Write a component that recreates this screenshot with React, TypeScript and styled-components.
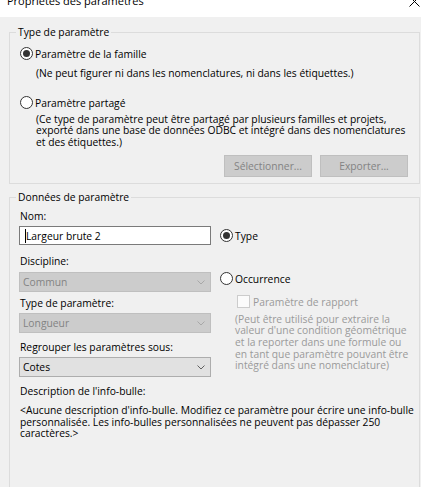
import React from 'react';
import styled, { createGlobalStyle } from 'styled-components';

const GlobalStyle = createGlobalStyle`
  html, body { margin: 0; padding: 0; background: #f0f0f0; }
  body {
    font-family: "Open Sans", "Noto Sans", sans-serif;
    font-size: 10.3px;
    color: #000;
  }
  * { box-sizing: border-box; }
`;

const Window = styled.div`
  width: 421px;
  height: 487px;
  overflow: hidden;
  display: flex;
  flex-direction: column;
  background: #f0f0f0;
`;

const TitleBar = styled.div`
  height: 17px;
  flex: none;
  background: #fff;
  display: flex;
  justify-content: space-between;
  align-items: flex-start;
  padding: 0 1px 0 7px;
  overflow: hidden;
`;

const Title = styled.span`
  font-size: 11px;
  line-height: 16px;
  margin-top: -7px;
  white-space: nowrap;
`;

const CloseIcon = styled.svg`
  flex: none;
  margin-top: -4px;
`;

const Content = styled.div`
  flex: 1;
  display: flex;
  flex-direction: column;
  gap: 7px;
  padding: 9px 1px 0 9px;
`;

const GroupBox = styled.fieldset<{ $height?: number }>`
  margin: 0;
  padding: 0;
  min-width: 0;
  border: 1px solid #dcdcdc;
  flex: none;
  ${(p) => (p.$height ? `height: ${p.$height}px;` : '')}
`;

const Legend = styled.legend`
  margin-left: 6px;
  padding: 0 2px;
  font-size: 10.3px;
  line-height: 12px;
`;

const TypeBody = styled.div`
  display: flex;
  flex-direction: column;
  padding: 9px 0 6px 10px;
`;

const RadioRow = styled.div<{ $mt?: number; $h?: number }>`
  display: flex;
  align-items: center;
  gap: 2px;
  height: ${(p) => p.$h ?? 13}px;
  margin-top: ${(p) => p.$mt ?? 0}px;
  line-height: 12px;
  white-space: nowrap;
`;

const Radio = styled.span<{ $checked?: boolean }>`
  width: 13px;
  height: 13px;
  flex: none;
  border-radius: 50%;
  border: 1px solid #333;
  background: #fff;
  display: inline-flex;
  align-items: center;
  justify-content: center;
  &::after {
    content: '';
    width: 7px;
    height: 7px;
    border-radius: 50%;
    background: #333;
    display: ${(p) => (p.$checked ? 'block' : 'none')};
  }
`;

const Note = styled.div<{ $mt?: number; $ml?: number; $lh?: number; $muted?: boolean }>`
  margin-top: ${(p) => p.$mt ?? 0}px;
  margin-left: ${(p) => p.$ml ?? 0}px;
  line-height: ${(p) => p.$lh ?? 12}px;
  color: ${(p) => (p.$muted ? '#9a9a9a' : '#000')};
  white-space: nowrap;
`;

const ButtonRow = styled.div`
  display: flex;
  justify-content: flex-end;
  gap: 8px;
  margin-top: 6.5px;
  padding-right: 11px;
`;

const Button = styled.button`
  width: 88px;
  height: 22px;
  border: 1px solid #bfbfbf;
  background: #cccccc;
  color: #838383;
  font-family: inherit;
  font-size: 10.3px;
  padding: 0;
  margin: 0;
`;

const DataBody = styled.div`
  display: flex;
  flex-direction: column;
  padding: 0 0 0 9px;
`;

const Columns = styled.div`
  display: flex;
  gap: 9px;
`;

const LeftColumn = styled.div`
  width: 192px;
  flex: none;
  display: flex;
  flex-direction: column;
`;

const RightColumn = styled.div`
  display: flex;
  flex-direction: column;
  padding-top: 23px;
`;

const FieldLabel = styled.div<{ $mt: number }>`
  margin-top: ${(p) => p.$mt}px;
  margin-left: 1px;
  line-height: 12px;
  white-space: nowrap;
`;

const TextBox = styled.div`
  margin-top: 4px;
  height: 19px;
  border: 1px solid #7a7a7a;
  background: #fff;
  display: flex;
  align-items: center;
  padding-left: 5px;
  line-height: 12px;
`;

const Caret = styled.span`
  width: 1px;
  height: 14px;
  background: #000;
  flex: none;
`;

const Select = styled.div<{ $mt: number; $disabled?: boolean }>`
  margin-top: ${(p) => p.$mt}px;
  height: 20px;
  border: 1px solid ${(p) => (p.$disabled ? '#bfbfbf' : '#adadad')};
  background: ${(p) => (p.$disabled ? '#cccccc' : '#e1e1e1')};
  color: ${(p) => (p.$disabled ? '#838383' : '#000')};
  display: flex;
  align-items: center;
  justify-content: space-between;
  padding: 0 5px 0 3px;
  line-height: 12px;
`;

const Chevron = styled.svg<{ $disabled?: boolean }>`
  flex: none;
  stroke: ${(p) => (p.$disabled ? '#a8a8a8' : '#606060')};
`;

const CheckRow = styled.div`
  display: flex;
  align-items: center;
  gap: 3px;
  height: 13px;
  margin: 10px 0 0 17px;
  color: #9a9a9a;
  line-height: 12px;
  white-space: nowrap;
`;

const CheckBox = styled.span`
  width: 13px;
  height: 13px;
  flex: none;
  border: 1px solid #cccccc;
  background: #fbfbfb;
`;

const ChevronDown = ({ disabled }: { disabled?: boolean }) => (
  <Chevron $disabled={disabled} width="8" height="5" viewBox="0 0 8 5" fill="none" strokeWidth="1">
    <polyline points="0.5,0.5 4,4 7.5,0.5" />
  </Chevron>
);

export default function App() {
  return (
    <>
      <GlobalStyle />
      <Window>
        <TitleBar>
          <Title>Propriétés des paramètres</Title>
          <CloseIcon width="11" height="11" viewBox="0 0 11 11" fill="none" stroke="#000" strokeWidth="1">
            <line x1="0.5" y1="0.5" x2="10.5" y2="10.5" />
            <line x1="10.5" y1="0.5" x2="0.5" y2="10.5" />
          </CloseIcon>
        </TitleBar>
        <Content>
          <GroupBox>
            <Legend>Type de paramètre</Legend>
            <TypeBody>
              <RadioRow>
                <Radio $checked />
                <span>Paramètre de la famille</span>
              </RadioRow>
              <Note $mt={7} $ml={16}>
                (Ne peut figurer ni dans les nomenclatures, ni dans les étiquettes.)
              </Note>
              <RadioRow $mt={17}>
                <Radio />
                <span>Paramètre partagé</span>
              </RadioRow>
              <Note $mt={4.5} $ml={16} $lh={11.67}>
                (Ce type de paramètre peut être partagé par plusieurs familles et projets,
                <br />
                exporté dans une base de données ODBC et intégré dans des nomenclatures
                <br />
                et des étiquettes.)
              </Note>
              <ButtonRow>
                <Button disabled>Sélectionner...</Button>
                <Button disabled>Exporter...</Button>
              </ButtonRow>
            </TypeBody>
          </GroupBox>
          <GroupBox $height={310}>
            <Legend>Données de paramètre</Legend>
            <DataBody>
              <Columns>
                <LeftColumn>
                  <FieldLabel $mt={7}>Nom:</FieldLabel>
                  <TextBox>
                    <Caret />
                    <span>Largeur brute 2</span>
                  </TextBox>
                  <FieldLabel $mt={10}>Discipline:</FieldLabel>
                  <Select $mt={5} $disabled>
                    <span>Commun</span>
                    <ChevronDown disabled />
                  </Select>
                  <FieldLabel $mt={5}>Type de paramètre:</FieldLabel>
                  <Select $mt={4} $disabled>
                    <span>Longueur</span>
                    <ChevronDown disabled />
                  </Select>
                  <FieldLabel $mt={8}>Regrouper les paramètres sous:</FieldLabel>
                  <Select $mt={4}>
                    <span>Cotes</span>
                    <ChevronDown />
                  </Select>
                </LeftColumn>
                <RightColumn>
                  <RadioRow $h={19}>
                    <Radio $checked />
                    <span>Type</span>
                  </RadioRow>
                  <RadioRow $mt={27}>
                    <Radio />
                    <span>Occurrence</span>
                  </RadioRow>
                  <CheckRow>
                    <CheckBox />
                    <span>Paramètre de rapport</span>
                  </CheckRow>
                  <Note $mt={5.5} $ml={15} $lh={11.67} $muted>
                    (Peut être utilisé pour extraire la
                    <br />
                    valeur d'une condition géométrique
                    <br />
                    et la reporter dans une formule ou
                    <br />
                    en tant que paramètre pouvant être
                    <br />
                    intégré dans une nomenclature)
                  </Note>
                </RightColumn>
              </Columns>
              <FieldLabel $mt={8}>Description de l'info-bulle:</FieldLabel>
              <Note $mt={8} $ml={1} $lh={11.67}>
                &lt;Aucune description d'info-bulle. Modifiez ce paramètre pour écrire une info-bulle
                <br />
                personnalisée. Les info-bulles personnalisées ne peuvent pas dépasser 250
                <br />
                caractères.&gt;
              </Note>
            </DataBody>
          </GroupBox>
        </Content>
      </Window>
    </>
  );
}
